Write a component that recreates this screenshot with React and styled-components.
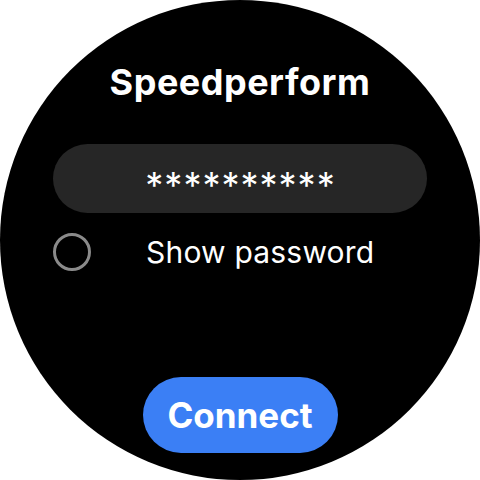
import styled, { createGlobalStyle } from 'styled-components'

const Global = createGlobalStyle`
  html, body {
    margin: 0;
    padding: 0;
    background: #ffffff;
  }
  * {
    box-sizing: border-box;
  }
`

const Watch = styled.div`
  width: 480px;
  height: 480px;
  border-radius: 50%;
  background: #000000;
  overflow: hidden;
  display: flex;
  flex-direction: column;
  align-items: center;
  font-family: Inter, 'Noto Sans', sans-serif;
  color: #ffffff;
`

const Title = styled.h1`
  margin: 58px 0 0;
  font-size: 36px;
  font-weight: 700;
  line-height: 48px;
  letter-spacing: 0.5px;
`

const Field = styled.div`
  margin-top: 38px;
  width: 374px;
  height: 69px;
  border-radius: 35px;
  background: #262626;
  display: flex;
  align-items: center;
  justify-content: center;
  font-size: 36px;
  letter-spacing: 1px;
  padding: 12px 0 0 1px;
`

const ToggleRow = styled.label`
  margin-top: 20px;
  width: 374px;
  display: flex;
  align-items: center;
  gap: 55px;
  font-size: 30px;
  letter-spacing: 0.2px;
`

const Radio = styled.span`
  width: 38px;
  height: 38px;
  border-radius: 50%;
  border: 3px solid #8a8a8a;
  flex: none;
`

const Button = styled.button`
  margin-top: 106px;
  width: 195px;
  height: 76px;
  border: none;
  border-radius: 38px;
  background: #3b7ff5;
  color: #ffffff;
  font-family: Inter, 'Noto Sans', sans-serif;
  font-size: 35px;
  font-weight: 700;
  cursor: pointer;
`

export default function App() {
  return (
    <>
      <Global />
      <Watch>
        <Title>Speedperform</Title>
        <Field>**********</Field>
        <ToggleRow>
          <Radio />
          Show password
        </ToggleRow>
        <Button>Connect</Button>
      </Watch>
    </>
  )
}
